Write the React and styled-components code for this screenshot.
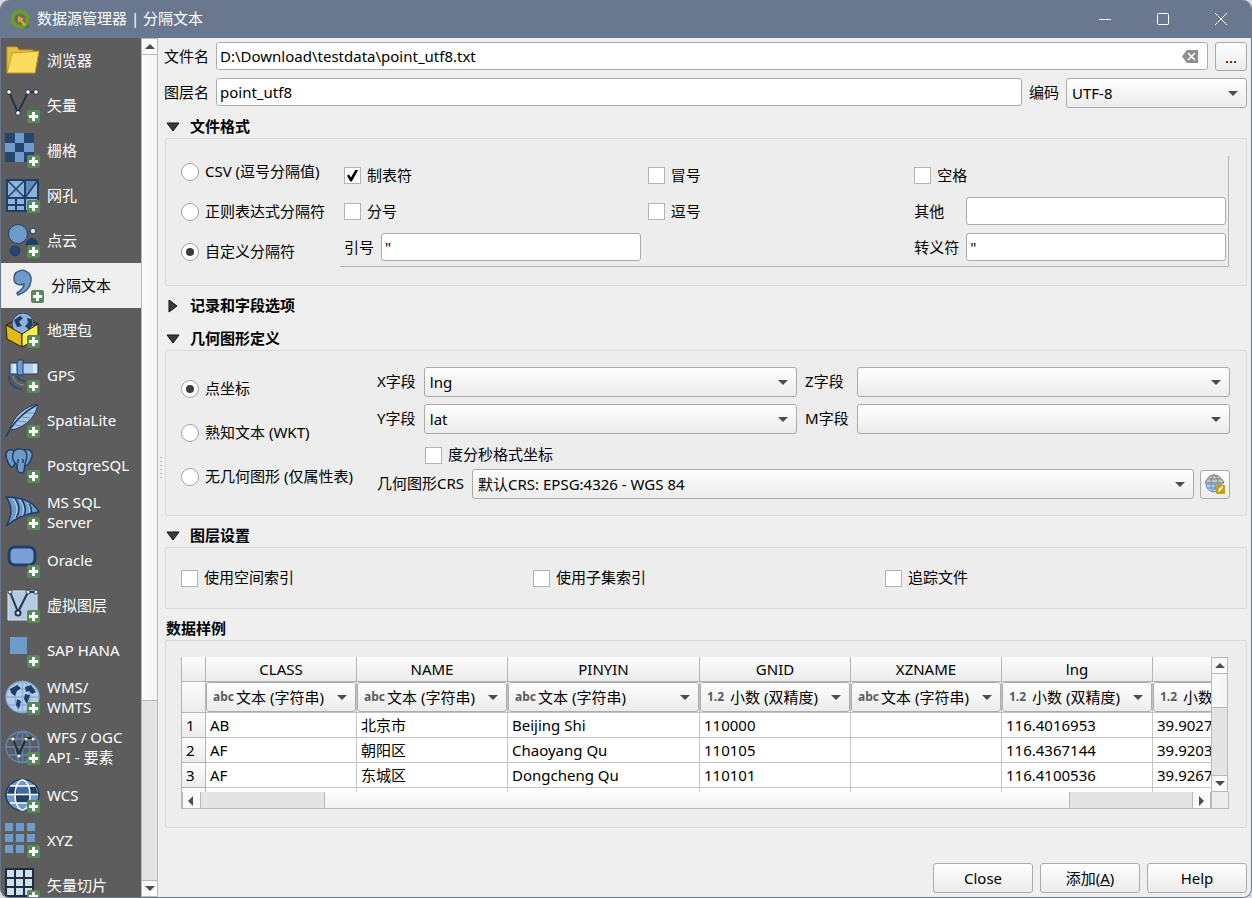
import React, { useState } from "react";
import styled, { createGlobalStyle, css } from "styled-components";

const GlobalStyle = createGlobalStyle`
  * {
    box-sizing: border-box;
  }

  body {
    margin: 0;
    background: #d5dae3;
  }

  body, button, input, select {
    font-family: "Noto Sans", "Noto Sans CJK SC", sans-serif;
    font-size: 15px;
    line-height: 20px;
    color: #000;
  }
`;

const Window = styled.div`
  display: flex;
  flex-direction: column;
  height: 100vh;
  border: 1px solid #6a788f;
  border-top: none;
  border-radius: 9px;
  overflow: hidden;
  background: #efefef;
`;

const TitleBar = styled.header`
  display: flex;
  align-items: center;
  flex: none;
  height: 38px;
  padding: 0 1px 0 9px;
  background: #6a788f;
`;

const Title = styled.h1`
  flex: 1;
  margin: 0 0 0 7px;
  padding-bottom: 2px;
  font-size: 15px;
  font-weight: 400;
  color: #fff;
`;

const WindowButton = styled.button`
  display: flex;
  align-items: center;
  justify-content: center;
  width: 58px;
  height: 38px;
  padding: 0;
  border: none;
  background: none;
`;

const Body = styled.div`
  display: flex;
  flex: 1;
  min-height: 0;
`;

const Sidebar = styled.nav`
  flex: none;
  width: 140px;
  overflow: hidden;
  background: #5d5d5d;
`;

const SourceLink = styled.a`
  display: flex;
  align-items: center;
  gap: 6px;
  height: ${(props) => (props.$tall ? "50px" : "45px")};
  padding-left: ${(props) => (props.$active ? "8px" : "4px")};
  color: ${(props) => (props.$active ? "#000" : "#fff")};
  background: ${(props) => (props.$active ? "#efefef" : "transparent")};
  text-decoration: none;
  white-space: pre;

  svg {
    flex: none;
  }
`;

const Caption = styled.span`
  padding-bottom: 2px;
`;

const Scrollbar = styled.div`
  display: flex;
  flex: none;
  flex-direction: ${(props) => (props.$horizontal ? "row" : "column")};
  width: ${(props) => (props.$horizontal ? "auto" : "17px")};
  height: ${(props) => (props.$horizontal ? "17px" : "auto")};
  border: solid #b9b9b9;
  border-width: ${(props) => (props.$horizontal ? "0 0 1px 1px" : "0 1px")};
  background: #e4e4e4;
`;

const ScrollArrow = styled.button`
  display: flex;
  align-items: center;
  justify-content: center;
  flex: none;
  width: ${(props) => (props.$horizontal ? "19px" : "auto")};
  height: ${(props) => (props.$horizontal ? "auto" : "17px")};
  padding: 0;
  border: solid #b9b9b9;
  border-width: ${(props) => (props.$horizontal ? "0 1px" : "1px 0")};
  background: #fafafa;
`;

const ScrollThumb = styled.div`
  flex: ${(props) => props.$size};
  border: solid #b9b9b9;
  border-width: ${(props) => (props.$horizontal ? "0 1px" : "0 0 1px")};
  background: linear-gradient(
    ${(props) => (props.$horizontal ? "to bottom" : "to right")},
    #fcfcfc,
    #f3f3f3
  );
`;

const ScrollGap = styled.div`
  flex: ${(props) => props.$size};
`;

const Splitter = styled.div`
  display: flex;
  align-items: center;
  justify-content: center;
  flex: none;
  width: 6px;
`;

const SplitterDots = styled.div`
  width: 2px;
  height: 21px;
  background: repeating-linear-gradient(#bdbdbd 0 1px, transparent 1px 4px);
`;

const Main = styled.main`
  display: flex;
  flex-direction: column;
  flex: 1;
  min-width: 0;
  padding: 4px;
  padding-left: 0;
`;

const FormRow = styled.div`
  display: flex;
  align-items: center;
  gap: 7px;
  height: ${(props) => (props.$combo ? "30px" : "29px")};
  margin-bottom: 7px;
`;

const FieldLabel = styled.label`
  flex: none;
  padding-bottom: 2px;
  white-space: nowrap;
`;

const TextInput = styled.input`
  flex: 1;
  align-self: start;
  width: 100%;
  min-width: 0;
  height: 28px;
  padding: 0 3px;
  border: 1px solid #ababab;
  border-radius: 3px;
  outline: none;
  background: #fff;
`;

const ClearableBox = styled.div`
  display: flex;
  align-items: center;
  align-self: start;
  flex: 1;
  height: 28px;
  padding-right: 9px;
  border: 1px solid #ababab;
  border-radius: 3px;
  background: #fff;

  input {
    height: 26px;
    border: none;
  }
`;

const ClearButton = styled.button`
  display: flex;
  padding: 0;
  border: none;
  background: none;
`;

const raised = css`
  border: 1px solid #ababab;
  border-radius: 3px;
  background: linear-gradient(#fefefe, #ececec);
`;

const PushButton = styled.button`
  ${raised}
  width: 100px;
  height: 30px;
  padding: 0;
`;

const ToolButton = styled.button`
  ${raised}
  display: flex;
  align-items: center;
  justify-content: center;
  flex: none;
  width: ${(props) => (props.$small ? "30px" : "32px")};
  height: 29px;
  padding: 0;
`;

const ComboBox = styled.div`
  display: grid;
  flex: ${(props) => (props.$fixed ? "none" : "1")};
  width: ${(props) => (props.$fixed ? "181px" : "auto")};
  min-width: 0;
  align-items: center;

  > * {
    grid-area: 1 / 1;
  }

  > svg {
    justify-self: end;
    margin-right: 9px;
    pointer-events: none;
  }
`;

const Select = styled.select`
  ${raised}
  width: 100%;
  min-width: 0;
  height: 30px;
  padding: 0 24px 0 ${(props) => (props.$prefixed ? "29px" : "5px")};
  outline: none;
  appearance: none;
`;

const TypePrefix = styled.span`
  justify-self: start;
  margin-left: 7px;
  font-size: 12px;
  font-weight: 700;
  color: #5b5b5b;
  pointer-events: none;
`;

const SectionTitle = styled.button`
  display: flex;
  align-items: center;
  gap: 10px;
  height: 23px;
  margin-bottom: ${(props) => (props.$closed ? "10px" : "0")};
  padding: 0 0 0 2px;
  border: none;
  background: none;
  font-weight: 700;
`;

const PlainTitle = styled.h2`
  height: 23px;
  margin: 0;
  padding-left: 2px;
  font-size: 15px;
  line-height: 23px;
`;

const Panel = styled.section`
  display: flex;
  gap: ${(props) => props.$gap || "0"};
  margin: 0 0 8px 1px;
  padding: ${(props) => props.$padding};
  border: 1px solid #d9d9d9;
  border-radius: 2px;
  background: #ededed;
`;

const RadioColumn = styled.div`
  display: flex;
  flex-direction: column;
  flex: none;
  justify-content: center;
  width: ${(props) => props.$width};
  gap: ${(props) => props.$gap};
`;

const OptionLabel = styled.label`
  display: flex;
  align-items: center;
  gap: 6px;
  height: 20px;
  white-space: nowrap;
  grid-column: span ${(props) => props.$span || 1};
`;

const Checkbox = styled.input.attrs({ type: "checkbox" })`
  display: grid;
  place-items: center;
  width: 17px;
  height: 17px;
  margin: 0;
  border: 1px solid #b4b4b4;
  background: #fff;
  appearance: none;

  &:checked::before {
    content: "";
    width: 11px;
    height: 12px;
    background: #000;
    clip-path: polygon(0 52%, 18% 42%, 36% 66%, 78% 0, 100% 6%, 44% 100%, 30% 100%);
  }
`;

const Radio = styled.input.attrs({ type: "radio" })`
  display: grid;
  place-items: center;
  width: 18px;
  height: 18px;
  margin: 0;
  border: 1px solid #a2a2a2;
  border-radius: 50%;
  background: #fff;
  appearance: none;

  &:checked::before {
    content: "";
    width: 8px;
    height: 8px;
    border-radius: 50%;
    background: #3c3c3c;
  }
`;

const DelimiterGrid = styled.div`
  display: grid;
  flex: 1;
  grid-template-columns: auto 1fr 1fr auto 1fr;
  grid-auto-rows: 29px;
  align-items: center;
  gap: 7px;
  padding: 5px 2px 4px 4px;
  border: solid #b4b4b4;
  border-width: 0 1px 1px 0;
`;

const GeometryFields = styled.div`
  flex: 1;
`;

const FieldGrid = styled.div`
  display: grid;
  grid-template-columns: auto 1fr auto 1fr;
  align-items: center;
  gap: 7px 8px;
`;

const DmsRow = styled.div`
  display: flex;
  align-items: center;
  height: 28px;
  margin-top: 7px;
  padding-left: 48px;
`;

const CrsRow = styled.div`
  display: flex;
  align-items: center;
  gap: 6px;

  ${FieldLabel} {
    margin-right: 2px;
  }
`;

const SettingsGrid = styled.div`
  display: grid;
  flex: 1;
  grid-template-columns: repeat(3, 1fr);
  gap: 6px;
`;

const SampleFrame = styled.div`
  display: grid;
  flex: 1;
  grid-template-columns: minmax(0, 1fr) 18px;
  grid-template-rows: 135px 17px;
  min-width: 0;
`;

const SampleViewport = styled.div`
  overflow: hidden;
  border-left: 1px solid #b4b4b4;
  background: #fff;
`;

const SampleTable = styled.table`
  width: 1122px;
  table-layout: fixed;
  border-spacing: 0;

  th,
  td {
    height: 25px;
    padding: 0 4px;
    border: solid #c4c4c4;
    border-width: 0 1px 1px 0;
    font-weight: 400;
    text-align: left;
    white-space: nowrap;
  }

  th {
    border-color: #b4b4b4;
    background: linear-gradient(#fcfcfc, #ececec);
  }

  thead th {
    text-align: center;
  }
`;

const TypeCell = styled.td`
  && {
    height: 31px;
    padding: 0;
  }
`;

const Corner = styled.div`
  border: solid #b9b9b9;
  border-width: 0 1px 1px 1px;
`;

const Footer = styled.footer`
  display: flex;
  justify-content: flex-end;
  gap: 7px;
  margin-top: auto;
`;

const Arrow = ({ direction }) => {
  const points = {
    up: "0,6 5,1 10,6",
    down: "0,1 10,1 5,6",
    left: "6,-1 6,9 1,4",
    right: "2,-1 2,9 7,4",
  };
  return (
    <svg width="10" height="7" overflow="visible" aria-hidden="true">
      <polygon points={points[direction]} fill="#4d4d4d" />
    </svg>
  );
};

const Twisty = ({ open }) => (
  <svg width="14" height="14" aria-hidden="true">
    <polygon
      points={open ? "1,3 13,3 7,11" : "3,1 11,7 3,13"}
      fill="#3b3b3b"
      stroke="#111"
    />
  </svg>
);

const Plus = () => (
  <g>
    <rect x="22" y="22" width="13" height="13" rx="2" fill="#588a57" />
    <path d="M28.500 24v9M24 28.500h9" stroke="#fff" strokeWidth="3" />
  </g>
);

const Globe = ({ fill, line }) => (
  <g fill="none" stroke={line} strokeWidth="1.300">
    <ellipse cx="17.500" cy="17" rx="16.500" ry="15.500" fill={fill} />
    <ellipse cx="17.500" cy="17" rx="7.500" ry="15.500" />
    <path d="M17.500 1.500v31M1 17h33M4 9h27M4 25h27" />
  </g>
);

const LIGHT = "#6f9bcb";
const DARK = "#1f3f66";

const drawings = {
  browser: (
    <g stroke="#c79a1c">
      <path d="M2 29V4h10l2 3h14v5" fill="#e8bf3a" />
      <path d="M2 30L7 10l27-2-4 22z" fill="#fcdc5e" />
    </g>
  ),
  vector: (
    <g stroke="#253648" strokeWidth="2" fill="#fff">
      <path d="M4 4l9 21L23 4h8" fill="none" />
      <g strokeWidth="1">
        <circle cx="4" cy="4" r="2.300" />
        <circle cx="13" cy="25" r="2.300" />
        <circle cx="23" cy="4" r="2.300" />
        <circle cx="31" cy="4" r="2.300" />
      </g>
    </g>
  ),
  raster: (
    <g>
      <path d="M0 0h29v29H0z" fill="#25466f" />
      <path d="M10 0h9v10h-9zM0 10h10v9H0zM19 10h10v9H19zM10 19h9v10h-9z" fill={LIGHT} />
    </g>
  ),
  mesh: (
    <g stroke={DARK} strokeWidth="2" fill="#8fb2da">
      <path d="M2 2h31v31H2z" />
      <path d="M21 3h11L21 19z" fill="#5f8abb" stroke="none" />
      <path d="M2 20h31M20 2v31M2 27h18M11 20v13" fill="none" />
      <path d="M2 2l18 18M2 20L20 2M20 20L33 2" strokeWidth="1.500" fill="none" />
    </g>
  ),
  cloud: (
    <g stroke={DARK}>
      <circle cx="13" cy="11" r="9.500" fill={LIGHT} />
      <circle cx="28" cy="8" r="2.800" fill="#dbe6f3" />
      <circle cx="27" cy="21" r="5.500" fill={DARK} />
      <circle cx="10" cy="28" r="5" fill="#25466f" />
    </g>
  ),
  comma: (
    <path
      d="M8 4c6-4 15 0 14 9-1 8-7 12-13 14l-1-2c5-3 7-6 7-9-5 2-10 0-10-5 0-3 1-6 3-7z"
      fill={LIGHT}
      stroke="#375d88"
      strokeWidth="1.500"
    />
  ),
  geopackage: (
    <g stroke="#2a2408" strokeLinejoin="round">
      <path d="M1 12l16 8 16-9-16-7z" fill="#7a5f08" />
      <circle cx="18" cy="11" r="11" fill="#8db1dd" stroke={DARK} />
      <path d="M9 7l6-4 3 2-4 4 3 4-5 1zM22 5l5 1 1 6-4 5-4-4 3-3z" fill={DARK} stroke="none" />
      <path d="M1 12l16 9v13L2 26z" fill="#e3b917" />
      <path d="M33 11l-16 10v13l16-9z" fill="#fdf04e" />
    </g>
  ),
  gps: (
    <g stroke={DARK}>
      <path d="M4 18c0 8 6 13 13 13" fill="none" stroke="#2c4d75" strokeWidth="2" />
      <path d="M8 18c1 5 5 9 11 9" fill="none" stroke="#7f93ab" />
      <path d="M12 18c1 3 4 5 8 5" fill="none" stroke="#2c4d75" strokeWidth="2" />
      <path d="M5 5h9v11H5zM17 5h16v11H17z" fill="#b4cdec" />
      <path d="M28 6h4v9h-4zM8 6h3v9H8z" fill="#dbe8f7" stroke="none" />
      <path d="M13 2h5v15h-5l-1-4V6z" fill={LIGHT} />
    </g>
  ),
  feather: (
    <g>
      <path d="M33 1C20 4 8 13 5 27l6-1C24 21 31 12 33 1z" fill="#a9c5e6" stroke={DARK} />
      <path d="M10 22l6 1M13 18l8 1M17 14l8 1M21 10l8 0" fill="none" stroke="#6d90b8" />
      <path d="M1 34C7 21 17 10 32 2" fill="none" stroke={DARK} strokeWidth="1.500" />
    </g>
  ),
  elephant: (
    <g fill={LIGHT} stroke={DARK} strokeWidth="1.500" strokeLinejoin="round">
      <path d="M7 2C1 1 0 6 2 12c2 5 4 8 6 7l3-5V3z" />
      <path d="M19 2c7-2 10 3 7 9-2 5-4 7-6 7l-3-4V3z" />
      <path d="M9 3c4-3 9-3 12 1 2 5 0 8-1 12-1 5 0 9-4 9s-4-4-4-9c-4-1-6-7-3-13z" />
      <path d="M13 15v-4M18 15v-4" fill="none" />
    </g>
  ),
  sail: (
    <g fill={LIGHT} stroke={DARK} strokeWidth="1.500" strokeLinejoin="round">
      <path d="M1 2c14 0 27 4 33 15-12 1-23 6-33 14 6-9 7-20 0-29z" />
      <path d="M10 3c5 7 5 14 1 20M17 5c4 6 4 11 2 15M24 9c3 4 3 6 2 9" fill="none" />
      <path d="M8 4c5 7 5 14 1 20M15 5c4 6 4 12 2 16M22 8c3 4 3 7 2 10" fill="none" stroke="#c4d8ee" strokeWidth="1" />
    </g>
  ),
  oracle: (
    <rect x="4" y="4" width="26" height="18" rx="6" fill="#7b9fd6" stroke={DARK} strokeWidth="3" />
  ),
  virtual: (
    <g stroke="#253648" fill="#fff">
      <path d="M3 3h29v29H3z" fill="#b4c9e2" stroke="#dbe5f1" />
      <path d="M5 4l8 20L23 4h8" fill="none" strokeWidth="2" />
      <circle cx="5" cy="4" r="2" />
      <circle cx="13" cy="25" r="2.500" strokeWidth="2" />
      <circle cx="23" cy="4" r="2" />
      <circle cx="31" cy="4" r="2" />
    </g>
  ),
  hana: <path d="M5 4h17v17H5z" fill={LIGHT} />,
  wms: (
    <g>
      <Globe fill="#b5cdeb" line="#8aadd6" />
      <path d="M5 9l7-4 4 3-4 3-2 5-4-3zM12 19l4 2-2 8-3-4zM20 7l6-2 5 7-4 2-3-3-3 1zM20 14l5 1-3 9-3-5z" fill={DARK} />
    </g>
  ),
  wfs: (
    <g>
      <Globe fill="none" line="#5d88b9" />
      <path d="M8 8l6 17 7-17h7" fill="none" stroke="#1f2d3d" strokeWidth="2" />
      <g fill="#fff">
        <circle cx="8" cy="9" r="1.500" />
        <circle cx="14" cy="26" r="1.500" />
        <circle cx="21" cy="9" r="1.500" />
        <circle cx="28" cy="9" r="1.500" />
      </g>
    </g>
  ),
  wcs: (
    <g fill="none" stroke="#fff" strokeWidth="1.500">
      <ellipse cx="17.500" cy="17" rx="16.500" ry="15.500" fill={LIGHT} stroke={DARK} />
      <path d="M5 8h25l3 8H2zM11 17h14v8H11z" fill={DARK} stroke="none" />
      <path d="M12 8h12v8H12z" fill="#3f6d9f" stroke="none" />
      <ellipse cx="17.500" cy="17" rx="7.500" ry="15" />
      <path d="M2 16.500h31M5 8h25M5 25h25" />
    </g>
  ),
  xyz: (
    <path
      d="M0 0h8v8H0zM11 0h8v8h-8zM22 0h8v8h-8zM0 11h8v8H0zM11 11h8v8h-8zM22 11h8v8h-8zM0 22h8v8H0zM11 22h8v8h-8z"
      fill={LIGHT}
    />
  ),
  tiles: (
    <g stroke="#1f2d3d" strokeWidth="2" fill="#cfdeef">
      <path d="M1 1h27v27H1z" />
      <path d="M10 1v27M19 1v27M1 10h27M1 19h27" />
    </g>
  ),
};

const SourceIcon = ({ name }) => (
  <svg width="36" height="36" viewBox="0 0 36 36" aria-hidden="true">
    {drawings[name]}
    {name !== "browser" && <Plus />}
  </svg>
);

const Logo = () => (
  <svg width="20" height="20" viewBox="0 0 20 20" aria-hidden="true">
    <path d="M11 11l4-1 5 8-5 2z" fill="#4f7d22" />
    <circle cx="10" cy="10" r="7.500" fill="#5f6f62" stroke="#6d9a2c" strokeWidth="4" />
    <path d="M8 7l6 3-2 1 4 5-2 1-4-5-2 2z" fill="#e9a13b" />
  </svg>
);

const CrsIcon = () => (
  <svg width="20" height="20" viewBox="0 0 20 20" aria-hidden="true">
    <path d="M1 10a8 8 0 0 0 16 0z" fill="#a8cdf0" stroke="#5f92c4" />
    <path d="M0 9c2-5 5-8 9-8s8 3 10 8z" fill="#c3c7c8" stroke="#6c7476" />
    <path d="M3 5h13M6 9c0-4 1-7 3-8 3 1 4 4 4 8" fill="none" stroke="#7d8587" />
    <path d="M6 10c0 4 1 6 3 8M3 14h10M10 10v6" fill="none" stroke="#5f92c4" />
    <rect x="11" y="11" width="9" height="9" rx="1" fill="#c3a014" />
    <path d="M13 18l1-3 3-3 1 1-3 4z" fill="#fff" />
  </svg>
);

const SOURCES = [
  { icon: "browser", label: "浏览器" },
  { icon: "vector", label: "矢量" },
  { icon: "raster", label: "栅格" },
  { icon: "mesh", label: "网孔" },
  { icon: "cloud", label: "点云" },
  { icon: "comma", label: "分隔文本" },
  { icon: "geopackage", label: "地理包" },
  { icon: "gps", label: "GPS" },
  { icon: "feather", label: "SpatiaLite" },
  { icon: "elephant", label: "PostgreSQL" },
  { icon: "sail", label: "MS SQL\nServer" },
  { icon: "oracle", label: "Oracle" },
  { icon: "virtual", label: "虚拟图层" },
  { icon: "hana", label: "SAP HANA" },
  { icon: "wms", label: "WMS/\nWMTS" },
  { icon: "wfs", label: "WFS / OGC\nAPI - 要素" },
  { icon: "wcs", label: "WCS" },
  { icon: "xyz", label: "XYZ" },
  { icon: "tiles", label: "矢量切片" },
];

const COLUMNS = [
  { name: "CLASS", type: "text", width: 151 },
  { name: "NAME", type: "text", width: 151 },
  { name: "PINYIN", type: "text", width: 192 },
  { name: "GNID", type: "double", width: 151 },
  { name: "XZNAME", type: "text", width: 151 },
  { name: "lng", type: "double", width: 151 },
  { name: "", type: "double", width: 151 },
];

const ROWS = [
  ["AB", "北京市", "Beijing Shi", "110000", "", "116.4016953", "39.9027"],
  ["AF", "朝阳区", "Chaoyang Qu", "110105", "", "116.4367144", "39.9203"],
  ["AF", "东城区", "Dongcheng Qu", "110101", "", "116.4100536", "39.9267"],
];

const TYPES = {
  text: { prefix: "abc", label: "文本 (字符串)" },
  double: { prefix: "1.2", label: "小数 (双精度)" },
};

const FORMATS = ["CSV (逗号分隔值)", "正则表达式分隔符", "自定义分隔符"];
const GEOMETRIES = ["点坐标", "熟知文本 (WKT)", "无几何图形 (仅属性表)"];

function Combo({ id, value, fixed, prefix, label }) {
  return (
    <ComboBox $fixed={fixed}>
      <Select id={id} $prefixed={!!prefix} aria-label={label}>
        <option>{value}</option>
      </Select>
      {prefix && <TypePrefix>{prefix}</TypePrefix>}
      <Arrow direction="down" />
    </ComboBox>
  );
}

function RadioGroup({ name, options, value, onChange, gap, width }) {
  return (
    <RadioColumn $gap={gap} $width={width}>
      {options.map((option) => (
        <OptionLabel key={option}>
          <Radio
            name={name}
            checked={value === option}
            onChange={() => onChange(option)}
          />
          <Caption>{option}</Caption>
        </OptionLabel>
      ))}
    </RadioColumn>
  );
}

function Check({ label, span, defaultChecked }) {
  return (
    <OptionLabel $span={span}>
      <Checkbox defaultChecked={defaultChecked} />
      <Caption>{label}</Caption>
    </OptionLabel>
  );
}

function SampleData() {
  return (
    <SampleFrame>
      <SampleViewport>
        <SampleTable>
          <colgroup>
            <col width="24" />
            {COLUMNS.map((column, i) => (
              <col key={i} width={column.width} />
            ))}
          </colgroup>
          <thead>
            <tr>
              <th />
              {COLUMNS.map((column, i) => (
                <th key={i}>{column.name}</th>
              ))}
            </tr>
          </thead>
          <tbody>
            <tr>
              <th />
              {COLUMNS.map((column, i) => (
                <TypeCell key={i}>
                  <Combo
                    value={TYPES[column.type].label}
                    prefix={TYPES[column.type].prefix}
                    label={column.name}
                  />
                </TypeCell>
              ))}
            </tr>
            {ROWS.map((row, i) => (
              <tr key={i}>
                <th>{i + 1}</th>
                {row.map((cell, j) => (
                  <td key={j}>{cell}</td>
                ))}
              </tr>
            ))}
            <tr>
              <th />
              {COLUMNS.map((column, i) => (
                <td key={i} />
              ))}
            </tr>
          </tbody>
        </SampleTable>
      </SampleViewport>
      <Scrollbar>
        <ScrollArrow aria-label="up">
          <Arrow direction="up" />
        </ScrollArrow>
        <ScrollThumb $size={33} />
        <ScrollGap $size={66} />
        <ScrollArrow aria-label="down">
          <Arrow direction="down" />
        </ScrollArrow>
      </Scrollbar>
      <Scrollbar $horizontal>
        <ScrollArrow $horizontal aria-label="left">
          <Arrow direction="left" />
        </ScrollArrow>
        <ScrollGap $size={123} />
        <ScrollThumb $horizontal $size={746} />
        <ScrollGap $size={122} />
        <ScrollArrow $horizontal aria-label="right">
          <Arrow direction="right" />
        </ScrollArrow>
      </Scrollbar>
      <Corner />
    </SampleFrame>
  );
}

function App() {
  const [source, setSource] = useState("comma");
  const [fileName, setFileName] = useState("D:\\Download\\testdata\\point_utf8.txt");
  const [format, setFormat] = useState(FORMATS[2]);
  const [geometry, setGeometry] = useState(GEOMETRIES[0]);

  return (
    <>
      <GlobalStyle />
      <Window>
        <TitleBar>
          <Logo />
          <Title>数据源管理器 | 分隔文本</Title>
          <WindowButton aria-label="minimize">
            <svg width="12" height="12" stroke="#fff">
              <path d="M0 6.500h12" />
            </svg>
          </WindowButton>
          <WindowButton aria-label="maximize">
            <svg width="12" height="12" stroke="#fff" fill="none">
              <rect x="0.500" y="0.500" width="11" height="11" rx="1" />
            </svg>
          </WindowButton>
          <WindowButton aria-label="close window">
            <svg width="12" height="12" stroke="#fff">
              <path d="M0 0l12 12M12 0L0 12" />
            </svg>
          </WindowButton>
        </TitleBar>
        <Body>
          <Sidebar>
            {SOURCES.map(({ icon, label }) => (
              <SourceLink
                key={icon}
                href="#"
                $active={source === icon}
                $tall={label.includes("\n")}
                onClick={() => setSource(icon)}
              >
                <SourceIcon name={icon} />
                <Caption>{label}</Caption>
              </SourceLink>
            ))}
          </Sidebar>
          <Scrollbar>
            <ScrollArrow aria-label="scroll up">
              <Arrow direction="up" />
            </ScrollArrow>
            <ScrollThumb $size={644} />
            <ScrollGap $size={179} />
            <ScrollArrow aria-label="scroll down">
              <Arrow direction="down" />
            </ScrollArrow>
          </Scrollbar>
          <Splitter>
            <SplitterDots />
          </Splitter>
          <Main>
            <FormRow>
              <FieldLabel htmlFor="file">文件名</FieldLabel>
              <ClearableBox>
                <TextInput
                  id="file"
                  value={fileName}
                  onChange={(e) => setFileName(e.target.value)}
                />
                <ClearButton aria-label="clear" onClick={() => setFileName("")}>
                  <svg width="16" height="13">
                    <path d="M5 0h11v13H5L0 6.500z" fill="#8e8e8e" />
                    <path d="M6 3l7 7M13 3l-7 7" stroke="#fff" strokeWidth="1.500" />
                  </svg>
                </ClearButton>
              </ClearableBox>
              <ToolButton>...</ToolButton>
            </FormRow>
            <FormRow $combo>
              <FieldLabel htmlFor="layer">图层名</FieldLabel>
              <TextInput id="layer" defaultValue="point_utf8" />
              <FieldLabel htmlFor="encoding">编码</FieldLabel>
              <Combo id="encoding" value="UTF-8" fixed />
            </FormRow>

            <SectionTitle>
              <Twisty open />
              <Caption>文件格式</Caption>
            </SectionTitle>
            <Panel $padding="17px 17px 18px 15px">
              <RadioGroup
                name="format"
                options={FORMATS}
                value={format}
                onChange={setFormat}
                gap="20px"
                width="159px"
              />
              <DelimiterGrid>
                <Check label="制表符" span={2} defaultChecked />
                <Check label="冒号" />
                <Check label="空格" span={2} />
                <Check label="分号" span={2} />
                <Check label="逗号" />
                <FieldLabel htmlFor="other">其他</FieldLabel>
                <TextInput id="other" />
                <FieldLabel htmlFor="quote">引号</FieldLabel>
                <TextInput id="quote" defaultValue={'"'} />
                <span />
                <FieldLabel htmlFor="escape">转义符</FieldLabel>
                <TextInput id="escape" defaultValue={'"'} />
              </DelimiterGrid>
            </Panel>

            <SectionTitle $closed>
              <Twisty />
              <Caption>记录和字段选项</Caption>
            </SectionTitle>
            <SectionTitle>
              <Twisty open />
              <Caption>几何图形定义</Caption>
            </SectionTitle>
            <Panel $padding="16px 16px 16px 15px">
              <RadioGroup
                name="geometry"
                options={GEOMETRIES}
                value={geometry}
                onChange={setGeometry}
                gap="24px"
                width="196px"
              />
              <GeometryFields>
                <FieldGrid>
                  <FieldLabel htmlFor="x-field">X字段</FieldLabel>
                  <Combo id="x-field" value="lng" />
                  <FieldLabel htmlFor="z-field">Z字段</FieldLabel>
                  <Combo id="z-field" value="" />
                  <FieldLabel htmlFor="y-field">Y字段</FieldLabel>
                  <Combo id="y-field" value="lat" />
                  <FieldLabel htmlFor="m-field">M字段</FieldLabel>
                  <Combo id="m-field" value="" />
                </FieldGrid>
                <DmsRow>
                  <Check label="度分秒格式坐标" />
                </DmsRow>
                <CrsRow>
                  <FieldLabel htmlFor="crs">几何图形CRS</FieldLabel>
                  <Combo id="crs" value="默认CRS: EPSG:4326 - WGS 84" />
                  <ToolButton $small aria-label="CRS">
                    <CrsIcon />
                  </ToolButton>
                </CrsRow>
              </GeometryFields>
            </Panel>

            <SectionTitle>
              <Twisty open />
              <Caption>图层设置</Caption>
            </SectionTitle>
            <Panel $padding="20px 15px">
              <SettingsGrid>
                <Check label="使用空间索引" />
                <Check label="使用子集索引" />
                <Check label="追踪文件" />
              </SettingsGrid>
            </Panel>

            <PlainTitle>数据样例</PlainTitle>
            <Panel $padding="16px 17px 18px 15px">
              <SampleData />
            </Panel>

            <Footer>
              <PushButton>Close</PushButton>
              <PushButton>
                添加(<u>A</u>)
              </PushButton>
              <PushButton>Help</PushButton>
            </Footer>
          </Main>
        </Body>
      </Window>
    </>
  );
}

export default App;
